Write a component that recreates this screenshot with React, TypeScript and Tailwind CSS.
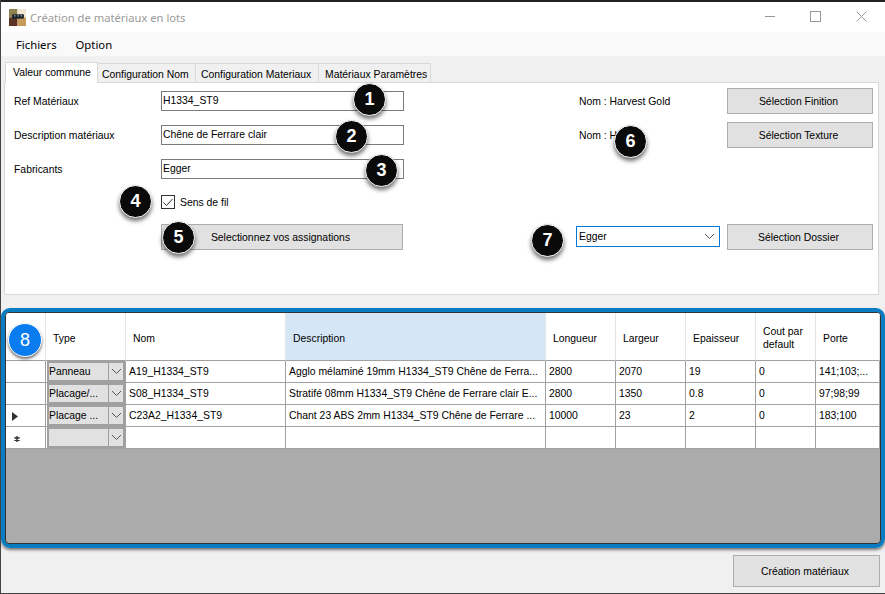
import { ReactNode } from 'react'

const columns = ['Type', 'Nom', 'Description', 'Longueur', 'Largeur', 'Epaisseur', 'Cout par default', 'Porte']

const rows = [
  {
    marker: '',
    type: 'Panneau',
    cells: ['A19_H1334_ST9', 'Agglo mélaminé 19mm H1334_ST9 Chêne de Ferra...', '2800', '2070', '19', '0', '141;103;...'],
  },
  {
    marker: '',
    type: 'Placage/...',
    cells: ['S08_H1334_ST9', 'Stratifé 08mm H1334_ST9 Chêne de Ferrare clair E...', '2800', '1350', '0.8', '0', '97;98;99'],
  },
  {
    marker: 'current',
    type: 'Placage ...',
    cells: ['C23A2_H1334_ST9', 'Chant 23 ABS 2mm H1334_ST9 Chêne de Ferrare ...', '10000', '23', '2', '0', '183;100'],
  },
  { marker: 'new', type: '', cells: ['', '', '', '', '', '', ''] },
]

const badges = [
  { n: 1, pos: 'left-[352px] top-[83px]' },
  { n: 2, pos: 'left-[334px] top-[120px]' },
  { n: 3, pos: 'left-[364px] top-[154px]' },
  { n: 4, pos: 'left-[118px] top-[185px]' },
  { n: 5, pos: 'left-[161px] top-[221px]' },
  { n: 6, pos: 'left-[613px] top-[125px]' },
  { n: 7, pos: 'left-[530px] top-[224px]' },
]

function Chevron({ className }: { className?: string }) {
  return (
    <svg width="11" height="7" viewBox="0 0 11 7" fill="none" className={className}>
      <path d="M1 1l4.5 4.5L10 1" stroke="#555" strokeWidth="1" />
    </svg>
  )
}

function Button({ children, className }: { children: ReactNode; className: string }) {
  return (
    <button className={`bg-[#e1e1e1] border border-[#adadad] text-[10.4px] text-black pr-[3px] ${className}`}>{children}</button>
  )
}

function Field({ label, value }: { label: string; value: string }) {
  return (
    <div className="h-[34px] flex items-center">
      <span className="w-[156px] pl-[9px]">{label}</span>
      <div className="w-[243px] h-[20px] border border-[#7a7a7a] bg-white pl-[1px] leading-[17px]">{value}</div>
    </div>
  )
}

function Badge({ n, pos }: { n: number; pos: string }) {
  return (
    <div
      className={`absolute ${pos} w-[33px] h-[33px] rounded-full bg-[#0a0a0a] border border-white shadow-[0_3px_4px_rgba(0,0,0,0.55)] flex items-center justify-center text-white text-[18px] font-bold`}
    >
      {n}
    </div>
  )
}

function TypeCell({ value }: { value: string }) {
  return (
    <div className="h-[22px] w-[80px] bg-white border-r border-b border-[#a0a0a0] pl-[1px]">
      <div className="h-full flex bg-[#e1e1e1] border-2 border-[#a0a0a0]">
        <span className="w-[59px] leading-[18px] whitespace-nowrap overflow-hidden">{value}</span>
        <span className="flex-1 border-l border-[#a0a0a0] flex items-center justify-center">
          <Chevron />
        </span>
      </div>
    </div>
  )
}

function Marker({ kind }: { kind: string }) {
  return (
    <div className="h-[22px] w-[40px] bg-white border-r border-b border-[#a0a0a0] flex items-center pl-[6px]">
      {kind === 'current' && (
        <svg width="6" height="9" viewBox="0 0 6 9" className="mt-[2px]">
          <path d="M0 0l6 4.5L0 9z" fill="#333" />
        </svg>
      )}
      {kind === 'new' && (
        <svg width="6" height="6" viewBox="0 0 7 7" className="ml-[2px] mt-[3px]">
          <path d="M3.5 0v7M0.5 1.7l6 3.6M6.5 1.7l-6 3.6" stroke="#333" strokeWidth="1.6" />
        </svg>
      )}
    </div>
  )
}

export default function App() {
  return (
    <div
      className="relative w-[885px] h-[594px] overflow-hidden flex flex-col bg-[#f0f0f0] border-l border-b border-[#444] text-[10.4px] leading-[13px] text-black"
      style={{ fontFamily: '"Liberation Sans", Arial, sans-serif' }}
    >
      {/* Title bar */}
      <div className="h-[32px] shrink-0 bg-white border-t-2 border-[#222] flex items-center pl-[8px]">
        <svg width="17" height="17" viewBox="0 0 16 16" className="shrink-0">
          <rect width="8" height="8" fill="#8f8250" />
          <rect x="8" width="8" height="8" fill="#efe6d4" />
          <rect y="8" width="8" height="8" fill="#5a3322" />
          <rect x="8" y="8" width="8" height="8" fill="#c79a5e" />
          <rect x="3" y="5" width="11" height="4" fill="#15202b" />
          <rect x="5" y="6" width="1" height="1" fill="#fff" />
          <rect x="8" y="6" width="1" height="1" fill="#fff" />
          <rect x="11" y="6" width="1" height="1" fill="#fff" />
        </svg>
        <span className="ml-[4px] text-[11.2px] text-[#9a9a9a]" style={{ fontFamily: '"Noto Sans", sans-serif' }}>
          Création de matériaux en lots
        </span>
        <div className="ml-auto flex items-center pr-[18px] -mt-[2px]">
          <span className="w-[10px] h-px bg-[#999]" />
          <span className="ml-[35px] w-[11px] h-[11px] border border-[#999]" />
          <svg width="11" height="11" viewBox="0 0 11 11" className="ml-[35px]">
            <path d="M0.5 0.5l10 10M10.5 0.5l-10 10" stroke="#999" strokeWidth="1" />
          </svg>
        </div>
      </div>

      {/* Menu */}
      <div
        className="h-[24px] shrink-0 bg-[#f9f9f9] flex items-center pl-[15px] gap-[19px] text-[11.3px]"
        style={{ fontFamily: '"Noto Sans", sans-serif' }}
      >
        <span>Fichiers</span>
        <span>Option</span>
      </div>

      {/* Tabs */}
      <div className="h-[26px] shrink-0 flex items-end pl-[4px] whitespace-nowrap">
        <div className="h-[21px] w-[93px] -mb-px z-10 bg-white border border-b-0 border-[#d9d9d9] pl-[7px] pt-[3px]">Valeur commune</div>
        <div className="h-[19px] w-[98px] border-t border-r border-[#d9d9d9] pl-[4px] pt-[4px]">Configuration Nom</div>
        <div className="h-[19px] w-[123px] border-t border-r border-[#d9d9d9] pl-[5px] pt-[4px]">Configuration Materiaux</div>
        <div className="h-[19px] w-[112px] border-t border-r border-[#d9d9d9] pl-[6px] pt-[4px]">Matériaux Paramètres</div>
      </div>

      {/* Common values panel */}
      <div className="h-[213px] w-[875px] ml-[3px] shrink-0 bg-white border border-[#d9d9d9] flex pt-[1px]">
        <div className="w-[399px] flex flex-col">
          <Field label="Ref Matériaux" value="H1334_ST9" />
          <Field label="Description matériaux" value="Chêne de Ferrare clair" />
          <Field label="Fabricants" value="Egger" />
          <div className="h-[32px] flex items-center pl-[156px]">
            <span className="w-[14px] h-[14px] border border-[#333] bg-white flex items-center justify-center">
              <svg width="10" height="9" viewBox="0 0 10 9" fill="none">
                <path d="M0.5 4.5l3 3L9.5 1" stroke="#333" strokeWidth="1" />
              </svg>
            </span>
            <span className="ml-[5px]">Sens de fil</span>
          </div>
          <div className="h-[34px] mt-[2px] flex items-center pl-[156px]">
            <Button className="w-[242px] h-[26px]">Selectionnez vos assignations</Button>
          </div>
        </div>
        <div className="flex-1 flex flex-col pl-[172px]">
          <div className="h-[34px] flex items-center">
            <span className="w-[151px] pl-[3px]">Nom : Harvest Gold</span>
            <Button className="w-[146px] h-[26px]">Sélection Finition</Button>
          </div>
          <div className="h-[34px] flex items-center">
            <span className="w-[151px] pl-[3px]">Nom : H</span>
            <Button className="w-[146px] h-[26px]">Sélection Texture</Button>
          </div>
          <div className="h-[34px] mt-[68px] flex items-center">
            <div className="w-[144px] h-[21px] mb-[1px] border border-[#0078d7] bg-white flex items-center justify-between pl-[2px] pr-[4px]">
              <span>Egger</span>
              <Chevron />
            </div>
            <Button className="ml-[7px] w-[146px] h-[26px]">Sélection Dossier</Button>
          </div>
        </div>
      </div>

      {/* Data grid with blue highlight frame */}
      <div className="mt-[13px] w-[884px] h-[240px] shrink-0 border-4 border-[#0a7cc1] rounded-[9px] shadow-[0_2px_3px_rgba(0,0,0,0.5)]">
        <div className="h-full border border-[#333] rounded-[4px] overflow-hidden bg-[#ababab] flex flex-col">
          <div className="grid grid-cols-[40px_80px_160px_260px_70px_70px_70px_60px_64px]">
            <div className="h-[48px] bg-white border-r border-b border-r-[#e5e5e5] border-b-[#a0a0a0]" />
            {columns.map((c) => (
              <div
                key={c}
                className={`h-[48px] border-r border-b border-r-[#e5e5e5] border-b-[#a0a0a0] flex items-center pl-[7px] pt-[3px] ${
                  c === 'Description' ? 'bg-[#d5e7f7]' : 'bg-white'
                }`}
              >
                <span className={c === 'Cout par default' ? 'pr-[8px]' : ''}>{c}</span>
              </div>
            ))}
            {rows.map((r, i) => (
              <div key={i} className="contents">
                <Marker kind={r.marker} />
                <TypeCell value={r.type} />
                {r.cells.map((c, j) => (
                  <div
                    key={j}
                    className="h-[22px] bg-white border-r border-b border-[#a0a0a0] pl-[3px] leading-[22px] whitespace-nowrap overflow-hidden"
                  >
                    {c}
                  </div>
                ))}
              </div>
            ))}
          </div>
        </div>
      </div>

      {/* Footer */}
      <div className="flex-1 flex justify-end items-start pt-[7px] pr-[5px]">
        <Button className="w-[147px] h-[32px] pt-[1px]">Création matériaux</Button>
      </div>

      {/* Numbered callouts */}
      {badges.map((b) => (
        <Badge key={b.n} n={b.n} pos={b.pos} />
      ))}
      <div className="absolute left-[7px] top-[323px] w-[34px] h-[34px] rounded-full bg-[#0a7cf0] border border-white shadow-[0_2px_3px_rgba(0,0,0,0.55)] flex items-center justify-center text-white text-[18px]">
        8
      </div>
    </div>
  )
}
